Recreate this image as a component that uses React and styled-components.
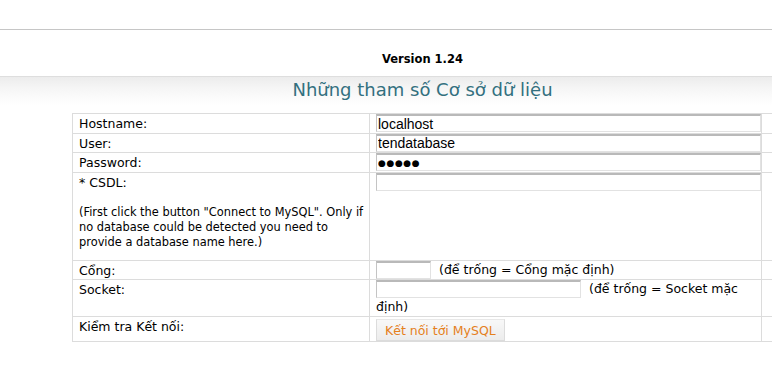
import React from 'react'
import styled, { createGlobalStyle } from 'styled-components'

const GlobalStyle = createGlobalStyle`
  html, body {
    margin: 0;
    padding: 0;
    background: #fff;
    overflow: hidden;
  }
  body {
    font-family: "DejaVu Sans", Verdana, sans-serif;
    font-size: 12.5px;
    color: #000;
  }
`;

// Page frame (the original page is a bit wider than the window)
const Page = styled.div`
  width: 845px;
`;

const TopBar = styled.div`
  height: 29px;
  border-bottom: 1px solid #c6c6c6;
`;

const VersionBar = styled.div`
  height: 47px;
  border-bottom: 1px solid #dedede;
  box-sizing: border-box;
  padding-top: 22px;
  text-align: center;
  font-weight: bold;
  font-size: 11.5px;
  line-height: 14px;
`;

const TitleBar = styled.div`
  background: linear-gradient(#ececec 0px, #f6f6f6 12px, #ffffff 28px);
  padding: 2px 0 12px;
  text-align: center;
`;

const Title = styled.h2`
  margin: 0;
  font-size: 18px;
  line-height: 22px;
  font-weight: normal;
  color: #33707f;
`;

const Table = styled.table`
  margin: 0 auto;
  width: 701px;
  border-collapse: collapse;
  table-layout: fixed;
  border: 1px solid #d4d4d4;
`;

const Cell = styled.td`
  border: 1px solid #dcdcdc;
  vertical-align: top;
  line-height: 15px;
  padding: ${({ field }) => (field ? '0 0 0 6px' : '2px 2px 1.7px 6px')};
  ${({ field }) => field && 'line-height: 18px;'}
`;

const Note = styled.div`
  margin: 15px 0 8px;
  font-size: 11.4px;
  white-space: nowrap;
`;

const Input = styled.input`
  box-sizing: border-box;
  width: ${({ w }) => w}px;
  height: 18px;
  margin: 0;
  padding: 0 1px;
  vertical-align: top;
  font-family: "Liberation Sans", Arial, sans-serif;
  font-size: 14px;
  color: #000;
  background: #fff;
  border: 1px solid #e2e2e2;
  border-top: 2px solid #b9b9b9;
  border-left: 1px solid #c4c4c4;
  outline: none;
`;

const Dots = styled(Input)`
  font-family: "DejaVu Sans", sans-serif;
  font-size: 9px;
  letter-spacing: 0.6px;
`;

const Hint = styled.span`
  margin-left: ${({ gap }) => gap}px;
`;

const Button = styled.button`
  margin: 2px 0 0;
  height: 22px;
  padding: 0 8px;
  font-family: "DejaVu Sans", Verdana, sans-serif;
  font-size: 12.5px;
  color: #e5801c;
  background: linear-gradient(#f8f8f8, #ececec);
  border: 1px solid #dcdcdc;
  border-top-color: #e8e8e8;
  cursor: pointer;
`;

const rows = [
  { label: 'Hostname:', value: 'localhost' },
  { label: 'User:', value: 'tendatabase' },
]

const App = () => (
  <Page>
    <GlobalStyle />
    <TopBar />
    <VersionBar>Version 1.24</VersionBar>
    <TitleBar>
      <Title>Những tham số Cơ sở dữ liệu</Title>
    </TitleBar>
    <Table>
      <colgroup>
        <col style={{ width: 297 }} />
        <col style={{ width: 392 }} />
        <col />
      </colgroup>
      <tbody>
        {rows.map((r) => (
          <tr key={r.label}>
            <Cell>{r.label}</Cell>
            <Cell field><Input w={385} defaultValue={r.value} /></Cell>
            <Cell />
          </tr>
        ))}
        <tr>
          <Cell>Password:</Cell>
          <Cell field><Dots w={385} defaultValue="●●●●●" readOnly /></Cell>
          <Cell />
        </tr>
        <tr>
          <Cell>
            * CSDL:
            <Note>
              (First click the button "Connect to MySQL". Only if<br />
              no database could be detected you need to<br />
              provide a database name here.)
            </Note>
          </Cell>
          <Cell field><Input w={385} /></Cell>
          <Cell />
        </tr>
        <tr>
          <Cell>Cổng:</Cell>
          <Cell field>
            <Input w={55} />
            <Hint gap={8}>(để trống = Cổng mặc định)</Hint>
          </Cell>
          <Cell />
        </tr>
        <tr>
          <Cell>Socket:</Cell>
          <Cell field>
            <Input w={205} />
            <Hint gap={8}>(để trống = Socket mặc định)</Hint>
          </Cell>
          <Cell />
        </tr>
        <tr>
          <Cell>Kiểm tra Kết nối:</Cell>
          <Cell field><Button>Kết nối tới MySQL</Button></Cell>
          <Cell />
        </tr>
      </tbody>
    </Table>
  </Page>
)

export default App
